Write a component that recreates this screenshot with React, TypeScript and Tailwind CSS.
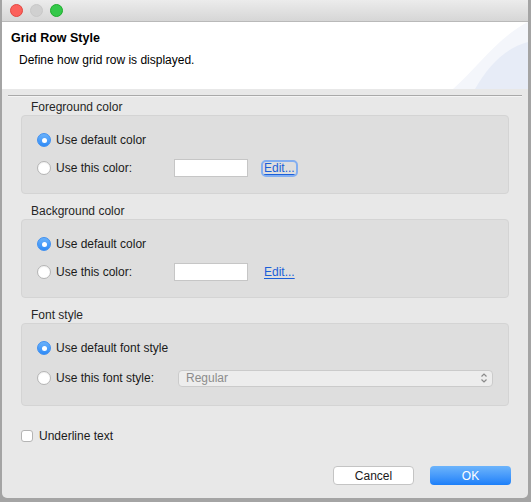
import React from "react"

const font = { fontFamily: '"Liberation Sans", Arial, sans-serif' }

function Radio({ checked }: { checked?: boolean }) {
  if (checked) {
    return (
      <span className="flex h-[14px] w-[14px] shrink-0 items-center justify-center rounded-full border border-[#3f8ff0] bg-gradient-to-b from-[#69b1fa] to-[#2d8bf7]">
        <span className="h-[5px] w-[5px] rounded-full bg-white" />
      </span>
    )
  }
  return <span className="h-[14px] w-[14px] shrink-0 rounded-full border border-[#b4b4b4] bg-white shadow-[inset_0_1px_1px_rgba(0,0,0,0.06)]" />
}

function Group({ label, children, className = "" }: { label: string; children: React.ReactNode; className?: string }) {
  return (
    <div className={className}>
      <div className="h-[15px] pl-[10px] text-[12px] leading-[15px] text-[#262626]">{label}</div>
      <div className="w-[488px] rounded-[4px] border border-[#d4d4d4] bg-[#dedede] pl-[15px]">{children}</div>
    </div>
  )
}

function ColorRow({ focus }: { focus?: boolean }) {
  return (
    <div className="flex h-[18px] items-center">
      <div className="flex w-[137px] items-center gap-[5px]">
        <Radio />
        <span>Use this color:</span>
      </div>
      <div className="h-[18px] w-[74px] border border-[#c6c6c6] bg-white" />
      <span
        className={
          "ml-[15px] rounded-[3px] px-[1px] leading-[13px] text-[#1b5fd8] underline underline-offset-2 " +
          (focus ? "outline outline-[2.5px] outline-[#83aef0]" : "")
        }
      >
        Edit...
      </span>
    </div>
  )
}

export default function App() {
  return (
    <div className="h-[502px] w-[531px] overflow-hidden bg-[#a4a4a4] pl-[2px]" style={font}>
      <div className="flex h-[498px] w-[526px] flex-col overflow-hidden rounded-b-[5px] bg-[#e8e8e8] text-[12px] text-[#1a1a1a]">
        {/* title bar */}
        <div className="flex h-[22px] shrink-0 items-center gap-[7.5px] border-b border-[#b9b9b9] bg-gradient-to-b from-[#ececec] to-[#d6d6d6] pl-[8px]">
          <span className="h-[12.5px] w-[12.5px] rounded-full border border-[#e2463f] bg-[#fc605b]" />
          <span className="h-[12.5px] w-[12.5px] rounded-full border border-[#c8c8c8] bg-[#d0d0d0]" />
          <span className="h-[12.5px] w-[12.5px] rounded-full border border-[#1dad2b] bg-[#34c84a]" />
        </div>

        {/* header */}
        <div className="relative h-[67px] shrink-0 overflow-hidden bg-white pl-[9px] pt-[8px]">
          <svg className="absolute right-0 top-0" width="75" height="67" viewBox="0 0 75 67">
            <path d="M0 67 C 25 45, 45 15, 75 0 L 75 67 Z" fill="#f4f6fb" />
            <path d="M22 67 C 35 45, 50 27, 75 20 L 75 67 Z" fill="#e7ecf7" />
          </svg>
          <div className="relative text-[12.5px] font-bold leading-[16px] text-black">Grid Row Style</div>
          <div className="relative mt-[6px] pl-[8px] leading-[16px] text-black">Define how grid row is displayed.</div>
        </div>

        {/* separator band */}
        <div className="shrink-0 px-[6px] pt-[6px]">
          <div className="h-px bg-[#a9a9a9]" />
          <div className="h-px bg-[#f4f4f4]" />
        </div>

        <div className="flex flex-1 flex-col pl-[19px] pt-[3px]">
          <Group label="Foreground color">
            <div className="flex flex-col gap-[10px] pb-[16px] pt-[15px]">
              <div className="flex h-[18px] items-center gap-[5px]">
                <Radio checked />
                <span>Use default color</span>
              </div>
              <ColorRow focus />
            </div>
          </Group>

          <Group label="Background color" className="mt-[10px]">
            <div className="flex flex-col gap-[10px] pb-[16px] pt-[15px]">
              <div className="flex h-[18px] items-center gap-[5px]">
                <Radio checked />
                <span>Use default color</span>
              </div>
              <ColorRow />
            </div>
          </Group>

          <Group label="Font style" className="mt-[10px]">
            <div className="flex flex-col gap-[12px] pb-[18px] pt-[15px]">
              <div className="flex h-[18px] items-center gap-[5px]">
                <Radio checked />
                <span>Use default font style</span>
              </div>
              <div className="flex h-[18px] items-center">
                <div className="flex w-[141px] items-center gap-[5px]">
                  <Radio />
                  <span>Use this font style:</span>
                </div>
                <div className="flex h-[17px] w-[315px] items-center justify-between rounded-[4px] border border-[#cbcbcb] bg-[#ededed] pl-[7px] pr-[4px] text-[#8c8c8c]">
                  <span>Regular</span>
                  <svg width="8" height="12" viewBox="0 0 8 12" fill="none" stroke="#8a8a8a" strokeWidth="1.2">
                    <path d="M1.5 4.5 L4 2 L6.5 4.5" />
                    <path d="M1.5 7.5 L4 10 L6.5 7.5" />
                  </svg>
                </div>
              </div>
            </div>
          </Group>

          <div className="mt-[21px] flex h-[18px] items-center gap-[6px]">
            <span className="h-[12px] w-[12px] rounded-[3px] border border-[#b4b4b4] bg-white" />
            <span>Underline text</span>
          </div>

          <div className="mt-[21px] flex justify-end gap-[16px] pr-[17px]">
            <button className="h-[19px] w-[81px] rounded-[4px] border border-[#c4c4c4] bg-white text-[12px] text-[#1a1a1a]">
              Cancel
            </button>
            <button className="h-[19px] w-[81px] rounded-[4px] bg-gradient-to-b from-[#6cb4fb] to-[#1a7ff9] text-[12px] text-white">
              OK
            </button>
          </div>
        </div>
      </div>
    </div>
  )
}
